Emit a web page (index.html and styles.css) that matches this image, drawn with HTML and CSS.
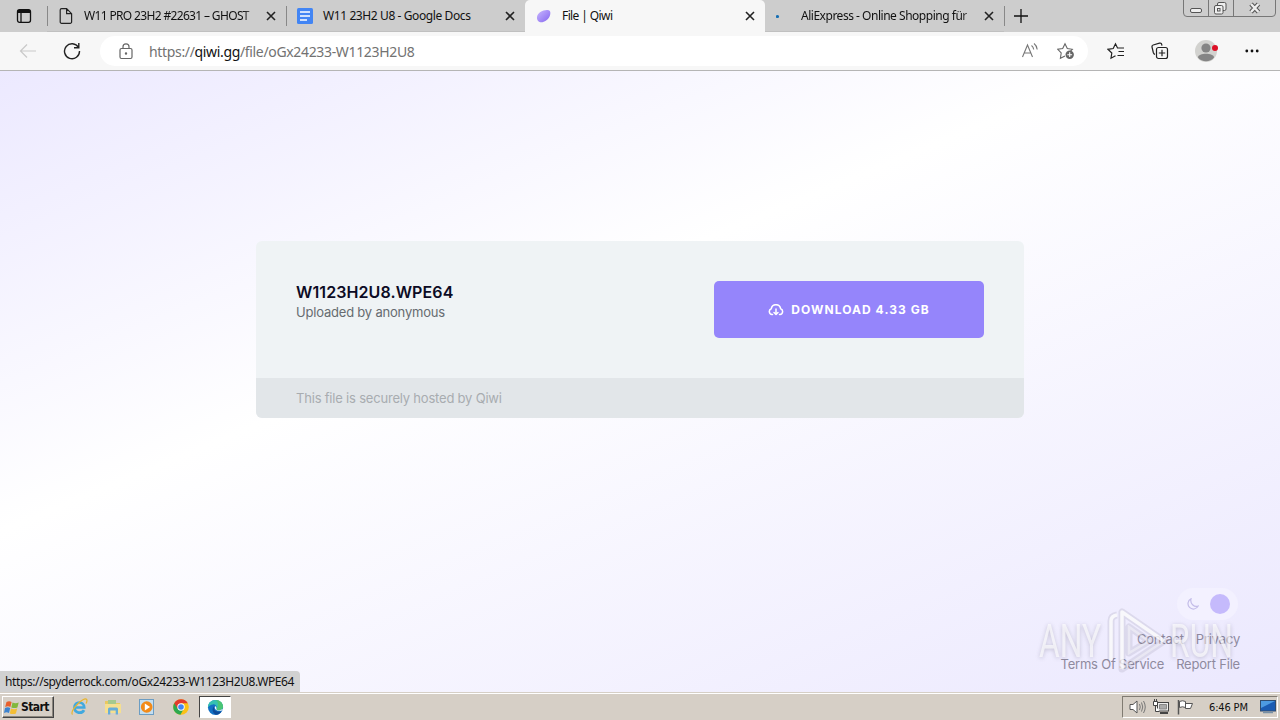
FILE: index.html
```html
<!DOCTYPE html>
<html lang="en">
<head>
  <meta charset="UTF-8" />
  <meta name="viewport" content="width=device-width, initial-scale=1.0" />
  <title>File | Qiwi</title>
  <link rel="stylesheet" href="styles.css">
</head>
<body>

  <!-- Tabs -->
  <div class="tab-strip">
    <div class="tab-actions">
      <svg width="16" height="16" viewBox="0 0 16 16" fill="none" stroke="#111" stroke-width="1.3"><rect x="1.5" y="1.7" width="13" height="12.6" rx="2"/><path d="M1.5 4h13M2 3h12" stroke-width="2"/><path d="M5 5v9"/></svg>
    </div>
    <div class="tab">
      <svg class="tab-icon" viewBox="0 0 16 16" fill="none" stroke="#222" stroke-width="1.2"><path d="M3.6.7h5l5 5v8.2a1.4 1.4 0 0 1-1.4 1.4H3.6a1.4 1.4 0 0 1-1.4-1.4V2.1A1.4 1.4 0 0 1 3.6.7zM8.6.7v5h5"/></svg>
      <span class="tab-title t-ghost">W11 PRO 23H2 #22631 – GHOST</span>
      <svg class="close" viewBox="0 0 10 10"><path d="M1 1l8 8M9 1L1 9"/></svg>
    </div>
    <div class="tab no-line">
      <svg class="tab-icon" viewBox="0 0 16 16"><rect width="16" height="16" rx="1.5" fill="#4285f4"/><path d="M3 4h10M3 8h10M3 12h7" stroke="#fff" stroke-width="1.7"/></svg>
      <span class="tab-title t-docs">W11 23H2 U8 - Google Docs</span>
      <svg class="close" viewBox="0 0 10 10"><path d="M1 1l8 8M9 1L1 9"/></svg>
    </div>
    <div class="tab active">
      <svg class="tab-icon" viewBox="0 0 16 16"><defs><linearGradient id="leaf" x1="0" y1="0" x2="1" y2="1"><stop offset="0" stop-color="#c9b8ff"/><stop offset="1" stop-color="#8465ee"/></linearGradient></defs><path d="M2 13C.2 10 .8 6.800 4 4.300 6.800 2.200 9.800 1.700 12 2c2 .2 2.600 1.800 2.300 4-.4 2.800-1.800 5-4.200 6.600-2.900 2-6 2.500-8.100.4z" fill="url(#leaf)"/></svg>
      <span class="tab-title t-qiwi">File | Qiwi</span>
      <svg class="close" viewBox="0 0 10 10"><path d="M1 1l8 8M9 1L1 9"/></svg>
    </div>
    <div class="tab">
      <svg class="tab-icon" viewBox="0 0 16 16"><circle cx="4" cy="8.500" r="3.800" fill="#b5cfe0" opacity=".0"/><circle cx="1.500" cy="8.500" r="1.600" fill="#146eb4"/></svg>
      <span class="tab-title t-ali">AliExpress - Online Shopping für</span>
      <svg class="close" viewBox="0 0 10 10"><path d="M1 1l8 8M9 1L1 9"/></svg>
    </div>
    <svg class="new-tab" width="14" height="14" viewBox="0 0 14 14"><path d="M7 0v14M0 7h14" stroke="#111" stroke-width="1.300"/></svg>
    <svg class="window-buttons" width="94" height="18" viewBox="0 0 94 18" fill="none">
      <path d="M.5 0v13a3.500 3.500 0 0 0 3.500 3.500h85a3.500 3.500 0 0 0 3.500-3.500V0M25.500 0v16M50.500 0v16" stroke="#777"/>
      <rect x="7.500" y="8.500" width="11" height="4" rx="1.500" fill="#eee" stroke="#555"/>
      <rect x="34.500" y="2.500" width="8.500" height="8" rx="1.500" fill="#eee" stroke="#555"/>
      <rect x="31.500" y="5.500" width="8.500" height="8.500" rx="1.500" fill="#eee" stroke="#555"/>
      <rect x="34.500" y="8.500" width="2.500" height="2.500" stroke="#555"/>
      <path d="M68 4l7.500 8M75.500 4L68 12" stroke="#555" stroke-width="4.500"/>
      <path d="M68 4l7.500 8M75.500 4L68 12" stroke="#eee" stroke-width="2.500"/>
    </svg>
  </div>

  <!-- Address bar -->
  <div class="toolbar">
    <svg class="back" width="18" height="16" viewBox="0 0 18 16" fill="none" stroke="#c9c9c9" stroke-width="1.200"><path d="M17 8H2M8 1.500L1.500 8 8 14.500"/></svg>
    <svg class="reload" width="18" height="18" viewBox="0 0 18 18" fill="none" stroke="#222" stroke-width="1.400"><path d="M15.500 5.500A7.500 7.500 0 1 0 16.500 9M15.800 1v4.800H11"/></svg>
    <div class="address">
      <svg class="lock" width="14" height="17" viewBox="0 0 14 17" fill="none" stroke="#666" stroke-width="1.200"><rect x="1" y="5.500" width="12" height="10" rx="1.500"/><path d="M4 5.500V3.800a3 3 0 0 1 6 0v1.700"/><circle cx="7" cy="10.500" r=".6" fill="#666"/></svg>
      <span class="url">https://<b>qiwi.gg</b>/file/oGx24233-W1123H2U8</span>
      <svg class="read" width="18" height="18" viewBox="0 0 18 18" fill="none" stroke="#777" stroke-width="1.100"><path d="M1.500 15L6.500 3l5 12M3.200 11h6.600M10.500 3.500c1.300 1 2 2.200 2.200 4M13 1.500c2 1.500 3 3.500 3.200 6"/></svg>
      <svg width="18" height="18" viewBox="0 0 18 18" fill="none" stroke="#666" stroke-width="1.100"><path d="M8 14l-4.600 2.200.8-5.200L.8 7.300 5.700 6.500 8 1.800l2.300 4.700 5 .8-1.800 1.800"/><circle cx="12.700" cy="12.700" r="4.200" fill="#666" stroke="none"/><path d="M12.700 10.300v4.800M10.300 12.700h4.800" stroke="#fff"/></svg>
    </div>
    <svg class="favorites" width="18" height="18" viewBox="0 0 18 18" fill="none" stroke="#222" stroke-width="1.200"><path d="M8.500 13.800L4 16.200l.8-5.200L1 7.300l5.200-.8L8.500 1.800l2 4.200h6.500M11.500 9.500H17M10.500 13.500H17"/></svg>
    <svg class="collections" width="18" height="18" viewBox="0 0 18 18" fill="none" stroke="#222" stroke-width="1.200"><path d="M4 12.500C2.800 12.200 2.600 11.600 2.300 10.500L1 5c-.2-1 .2-1.700 1.200-2L8.500 1.200c1-.3 1.900.2 2.200 1.300l.3 1.200"/><rect x="5.500" y="5.500" width="11" height="11" rx="2"/><path d="M11 7.800v6.400M7.800 11h6.400"/></svg>
    <svg class="profile" width="24" height="22" viewBox="0 0 24 22"><circle cx="11" cy="11" r="11" fill="#d2d2cf"/><circle cx="11" cy="8" r="4.600" fill="#858585"/><path d="M3 17.500c0-5 16-5 16 0-3.500 5-12.500 5-16 0z" fill="#858585"/><circle cx="20" cy="8" r="3" fill="#dc1026"/></svg>
    <svg class="more" width="14" height="4" viewBox="0 0 14 4" fill="#111"><circle cx="1.800" cy="2" r="1.400"/><circle cx="7" cy="2" r="1.400"/><circle cx="12.200" cy="2" r="1.400"/></svg>
  </div>

  <!-- Page -->
  <main class="page">
    <section class="card">
      <div class="card-body">
        <div class="file-info">
          <h1>W1123H2U8.WPE64</h1>
          <p>Uploaded by anonymous</p>
        </div>
        <a href="#" class="download">
          <svg width="16" height="12" viewBox="0 0 16 12" fill="none" stroke="#fff" stroke-width="1.500" stroke-linecap="round" stroke-linejoin="round"><path d="M4.500 10.500H4A3 3 0 0 1 3.300 4.700 4.700 4.700 0 0 1 12.600 4.700 3 3 0 0 1 12 10.500h-.5M8 5v5.500M6 8.500l2 2 2-2"/></svg>
          <span>DOWNLOAD 4.33 GB</span>
        </a>
      </div>
      <div class="card-footer"><span>This file is securely hosted by Qiwi</span></div>
    </section>

    <footer class="page-footer">
      <div class="theme-switch">
        <svg width="12" height="12" viewBox="0 0 12 12" fill="none" stroke="#c3bce8" stroke-width="1.200"><path d="M4 .8a5.400 5.400 0 1 0 7.200 7.300C7 9.500 2.800 5.500 4 .8z"/></svg>
        <span class="knob"></span>
      </div>
      <div class="links"><a>Contact</a><a>Privacy</a></div>
      <div class="links"><a>Terms Of Service</a><a>Report File</a></div>
    </footer>

    <svg class="watermark" width="204" height="72" viewBox="0 0 204 72">
      <g class="mark-text">
        <text x="4" y="53" textLength="62" lengthAdjust="spacingAndGlyphs">ANY</text>
        <text x="135" y="53" textLength="63" lengthAdjust="spacingAndGlyphs">RUN</text>
      </g>
      <path class="mark-shade" d="M76 56V17q0-5 6-6M87 8v57l42-28zM94 23v26l20-12z"/>
      <path class="mark-line" d="M76 56V17q0-5 6-6M87 65V8l42 29"/>
      <path class="mark-faint" d="M87 65l42-28M94 23v26l20-12z"/>
    </svg>
    <div class="status">https://spyderrock.com/oGx24233-W1123H2U8.WPE64</div>
  </main>

  <!-- Taskbar -->
  <div class="taskbar">
    <div class="start">
      <svg width="16" height="15" viewBox="0 0 16 15"><path d="M2.500 2C4.500.7 6 1 7.600 2L6.400 7C4.800 6 3.200 6 1.200 7z" fill="#e8602c"/><path d="M8.500 2.400c2 1 4 1 6.200 0l-1.300 5c-2 1-4 .9-6.100 0z" fill="#82b83c"/><path d="M1 8c2-1.100 3.600-1 5.200 0L5 13c-1.700-1-3.200-1-5 0z" fill="#3d83cf"/><path d="M7 8.400c2 1 4 1 6.200 0l-1.300 5c-2 1-4 .9-6.100 0z" fill="#f4be35"/></svg>
      <span>Start</span>
    </div>
    <div class="launch">
      <svg width="18" height="18" viewBox="0 0 18 18" fill="none"><path d="M4.500 9.500h9.700C14 2.700 4.500 3 4.500 9.500c0 6 7.500 6.600 9.500 2.600" stroke="#41a9df" stroke-width="2.700"/><path d="M2.500 16.500C-.5 13 14-2.500 16.800 1.700c.6 1.200 0 2.400-.7 3.800" stroke="#e9b52d" stroke-width="1.200"/></svg>
      <svg width="18" height="18" viewBox="0 0 18 18"><path d="M1 3h6l1.500 2H16v9H1z" fill="#e9c860"/><path d="M4 2h8v5H4z" fill="#a5c98e"/><path d="M1 6h16v9H1z" fill="#f5df90"/><path d="M4 16.500V11q0-1.500 1.500-1.500h7Q14 9.500 14 11v5.500h-2.300V12.500H6.300v4z" fill="#68add8"/></svg>
      <svg width="18" height="18" viewBox="0 0 18 18"><rect x="1.500" y="1.500" width="14" height="15" fill="#c4def0" stroke="#6c9dc3"/><circle cx="8.700" cy="9" r="5.800" fill="#f28a18"/><path d="M6.800 5.500v7l5.300-3.500z" fill="#fff"/></svg>
      <svg width="18" height="18" viewBox="0 0 18 18"><circle cx="9" cy="9" r="7.800" fill="#fbc116"/><path d="M9 9L2.200 5.200A7.800 7.800 0 0 1 15.800 5.200H9z" fill="#e33b2e"/><path d="M2.200 5.200A7.800 7.800 0 0 0 8.400 16.800L12 10.500 9 9z" fill="#2da94f"/><path d="M2.200 5.200L6 11 9 5.200z" fill="#e33b2e"/><circle cx="9" cy="9" r="3.700" fill="#fff"/><circle cx="9" cy="9" r="2.800" fill="#4285f4"/></svg>
    </div>
    <div class="running">
      <svg width="17" height="17" viewBox="0 0 18 18"><circle cx="9" cy="9" r="8" fill="#1270c4"/><path d="M1 9C.8 4 4.500 1 9 1c5 0 8 3.400 8 7 0 3-2.500 4-4.500 4-2 0-3-.6-2.600-1.500C11 8 9 5.500 6.300 5.700 4 5.800 2 7 1 9z" fill="#35c1b1"/><path d="M9 1c5 0 8 3.400 8 7 0 3-2.500 4-4.500 4-2 0-3-.6-2.600-1.500C12 8 13 4 9 1z" fill="#58c84d" opacity=".6"/><path d="M8 7.500c-2.200 4 2 7.400 7.500 5.500-1.500 2.500-3.500 3.500-5.500 3.800C5.500 15.500 4.600 10 8 7.500z" fill="#0d4a97"/><path d="M8.500 7.500c-1.200 3.500 2 5.800 7.300 4.800l1.400-1.800-4 1.500c-2 0-3.500-.5-3.300-1.500.3-.8.2-2-1.400-3z" fill="#fff"/></svg>
    </div>
    <div class="tray">
      <svg width="17" height="16" viewBox="0 0 17 16" fill="none" stroke="#555"><path d="M1 5.500h3L8 2v12L4 10.500H1z" fill="#fff"/><path d="M10.500 5q1.500 3 0 6M12.500 3.500q2.500 4.500 0 9M14.500 2q3.500 6 0 12" stroke="#777"/></svg>
      <svg width="17" height="16" viewBox="0 0 17 16" fill="none" stroke="#444"><rect x="4.500" y="3.500" width="11" height="8.500" fill="#eee"/><path d="M6.500 5.500h7v4.500h-7z" fill="#aaa" stroke="#888"/><path d="M7 14h8" stroke-width="2"/><path d="M.5 2.500h4v4h-4zM1.500 0v2M3.500 0v2M2.500 6.500v6h4" fill="#fff"/></svg>
      <svg width="17" height="16" viewBox="0 0 17 16" fill="#fff" stroke="#555"><path d="M2.500 2.500q3-1.500 6 0v6q-3-1.500-6 0zM8.500 4.500h7l-2 5h-5z"/><path d="M1.500 1v14.500" stroke-width="1.500"/></svg>
      <span class="clock">6:46 PM</span>
      <svg class="desktop" width="16" height="14" viewBox="0 0 16 14"><rect x=".5" y=".5" width="15" height="10.500" fill="#1b5cb3" stroke="#304d70"/><path d="M1 1h14L1 8z" fill="#4d9be2"/><path d="M3 12.500h10" stroke="#7890a6" stroke-width="1.500"/></svg>
    </div>
  </div>

</body>
</html>
```
FILE: styles.css
```css
* {
  box-sizing: border-box;
  margin: 0;
  padding: 0;
}

body {
  width: 1280px;
  height: 720px;
  overflow: hidden;
  display: flex;
  flex-direction: column;
  font-family: 'Noto Sans', 'Open Sans', sans-serif;
  font-size: 12px;
  color: #111;
}

svg {
  display: block;
  flex-shrink: 0;
}

/* Tabs */
.tab-strip {
  height: 32px;
  display: flex;
  align-items: flex-start;
  background: #cdcdcd;
}

.tab-actions {
  width: 47px;
  height: 32px;
  padding: 8px 0 0 16px;
}

.tab {
  position: relative;
  width: 239px;
  height: 32px;
  padding: 0 10px 0 11px;
  display: flex;
  align-items: center;
  border-bottom: 1px solid #c0c0c0;
}

.tab::after {
  content: "";
  position: absolute;
  right: -1px;
  top: 6px;
  width: 1px;
  height: 20px;
  background: #888;
}

.tab:nth-child(2)::before {
  content: "";
  position: absolute;
  left: 0;
  top: 6px;
  width: 1px;
  height: 20px;
  background: #888;
}

.tab.active {
  width: 240px;
  background: #f7f7f7;
  border-radius: 5px 5px 0 0;
  border-bottom-color: #f7f7f7;
}

.tab.active::after,
.tab.no-line::after {
  display: none;
}

.tab-icon {
  width: 16px;
  height: 16px;
  margin-right: 10px;
}

.tab-title {
  flex: 1;
  white-space: nowrap;
}

.close {
  width: 10px;
  height: 10px;
  stroke: #222;
  stroke-width: 1.6;
}

.t-ghost,
.t-ali {
  margin-right: 11px;
  -webkit-mask-image: linear-gradient(to right, #000 93%, rgba(0, 0, 0, 0.4));
  mask-image: linear-gradient(to right, #000 93%, rgba(0, 0, 0, 0.4));
}

.t-ghost {
  letter-spacing: -0.65px;
}

.t-docs {
  letter-spacing: -0.4px;
}

.t-qiwi {
  letter-spacing: -0.6px;
}

.t-ali {
  margin-left: -1px;
  letter-spacing: -0.48px;
}

.new-tab {
  margin: 9px 0 0 10px;
}

.window-buttons {
  margin: 0 3px 0 auto;
}

/* Address bar */
.toolbar {
  height: 39px;
  display: flex;
  align-items: center;
  background: #f7f7f7;
  border-bottom: 1px solid #b5b5b5;
}

.back {
  margin-left: 19px;
}

.reload {
  margin: 0 19px 0 26px;
}

.address {
  width: 988px;
  height: 30px;
  border-radius: 15px;
  background: #fff;
  display: flex;
  align-items: center;
  padding: 0 13px 0 19px;
}

.url {
  flex: 1;
  margin-left: 16px;
  font-size: 14px;
  letter-spacing: -0.34px;
  color: #727272;
}

.url b {
  font-weight: normal;
  color: #111;
}

.read {
  margin-right: 18px;
}

.favorites {
  margin-left: 19px;
}

.collections {
  margin-left: 26px;
}

.profile {
  margin-left: 26px;
}

.more {
  margin-left: 26px;
}

/* Page */
.page {
  position: relative;
  height: 621px;
  padding: 170px 40px 0;
  background: linear-gradient(157.5deg, #ece9ff 0%, #fff 40%, #ebe8fe 100%);
  font-family: Inter, sans-serif;
  display: flex;
  flex-direction: column;
  align-items: center;
}

.card {
  width: 768px;
  height: 177px;
  border-radius: 6px;
  overflow: hidden;
  background: #eff3f5;
}

.card-body {
  height: 137px;
  padding: 40px;
  display: flex;
  justify-content: space-between;
}

.file-info h1 {
  font-size: 16px;
  line-height: 22px;
  font-weight: 600;
  letter-spacing: 0.1px;
  color: #0c0b24;
}

.file-info p {
  font-size: 13px;
  line-height: 19px;
  letter-spacing: -0.2px;
  color: #666b70;
}

.download {
  width: 270px;
  height: 57px;
  border-radius: 5px;
  background: #9585fb;
  color: #fff;
  display: flex;
  align-items: center;
  justify-content: center;
  gap: 7px;
  font-size: 12px;
  font-weight: 700;
  letter-spacing: 1.05px;
  text-decoration: none;
}

.card-footer {
  height: 40px;
  padding-left: 40px;
  line-height: 40px;
  background: #e2e6e9;
  color: #a8acb0;
  font-size: 13px;
  letter-spacing: -0.2px;
}

.page-footer {
  width: 100%;
  margin-top: 170px;
  display: flex;
  flex-direction: column;
  align-items: flex-end;
}

.theme-switch {
  width: 61px;
  height: 32px;
  margin: 0 2px 7px 0;
  padding: 0 8px 0 10px;
  border-radius: 16px;
  background: #f3f1ff;
  display: flex;
  align-items: center;
  justify-content: space-between;
}

.knob {
  width: 20px;
  height: 20px;
  border-radius: 50%;
  background: #c5bafc;
}

.links {
  height: 25px;
  line-height: 25px;
  display: flex;
  gap: 12px;
  font-size: 13px;
  letter-spacing: -0.2px;
  color: #8f8a9e;
}

.watermark {
  position: absolute;
  left: 1035px;
  top: 533px;
}

.mark-text {
  font-family: Roboto, sans-serif;
  font-size: 47px;
  fill: rgba(255, 255, 255, 0.65);
  filter: drop-shadow(0 1px 2px rgba(70, 65, 90, 0.4));
}

.mark-shade {
  fill: none;
  stroke: rgba(70, 65, 90, 0.11);
  stroke-width: 7;
  stroke-linejoin: round;
}

.mark-line {
  fill: none;
  stroke: rgba(255, 255, 255, 0.8);
  stroke-width: 3.5;
  stroke-linejoin: round;
}

.mark-faint {
  fill: none;
  stroke: rgba(255, 255, 255, 0.4);
  stroke-width: 2.5;
}

.status {
  position: absolute;
  left: 0;
  bottom: 0;
  width: 300px;
  height: 21px;
  padding-left: 5px;
  border-radius: 0 4px 0 0;
  background: #d1d1d1;
  font-family: 'Noto Sans', sans-serif;
  font-size: 12px;
  line-height: 21px;
  letter-spacing: -0.39px;
  white-space: nowrap;
}

/* Taskbar */
.taskbar {
  height: 28px;
  padding: 3px 2px 2px;
  display: flex;
  background: #d6cfc6;
  border-top: 1px solid #d6cfc6;
  box-shadow: inset 0 1px #fff;
  font-family: 'DejaVu Sans Condensed', 'DejaVu Sans', sans-serif;
}

.start {
  width: 52px;
  height: 22px;
  padding-left: 1px;
  display: flex;
  align-items: center;
  gap: 1px;
  border: 1px solid;
  border-color: #fff #444 #444 #fff;
  box-shadow: inset -1px -1px #8b867d;
  font-size: 12px;
  font-weight: bold;
  letter-spacing: -0.6px;
}

.launch {
  margin-left: 16px;
  display: flex;
  align-items: center;
  gap: 16px;
}

.running {
  width: 32px;
  height: 22px;
  margin-left: 9px;
  display: flex;
  align-items: center;
  justify-content: center;
  background: #fff;
  border: 1px solid;
  border-color: #444 #fff #fff #444;
}

.tray {
  width: 156px;
  height: 22px;
  margin-left: auto;
  padding-left: 6px;
  display: flex;
  align-items: center;
  gap: 7px;
  border: 1px solid;
  border-color: #807b72 #fff #fff #807b72;
  font-size: 11px;
}

.clock {
  margin-left: 8px;
  white-space: nowrap;
  letter-spacing: -0.15px;
}

.desktop {
  margin: 0 1px 0 auto;
}
```
